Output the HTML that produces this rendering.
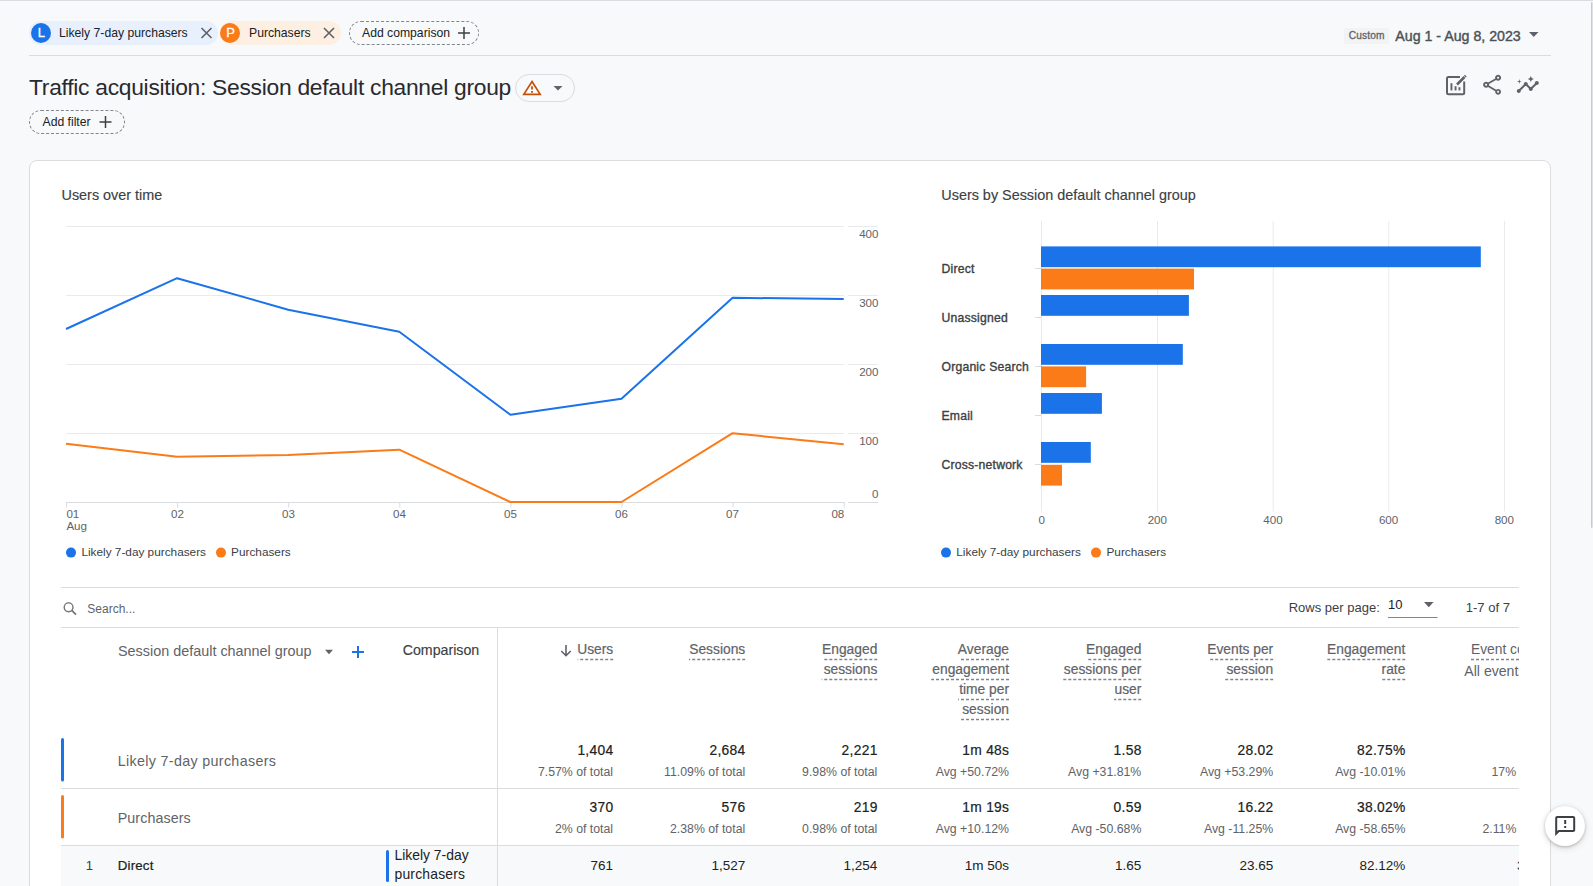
<!DOCTYPE html><html><head><meta charset="utf-8"><style>
html,body{margin:0;padding:0;}
body{width:1593px;height:886px;overflow:hidden;position:relative;background:#f8f9fa;font-family:"Liberation Sans",sans-serif;color:#202124;}
.t{position:absolute;white-space:nowrap;line-height:1;}
svg{position:absolute;left:0;top:0;}
</style></head><body>
<div style="position:absolute;left:0px;top:0px;width:1593px;height:1px;background:#dadce0"></div>
<div style="position:absolute;left:1590.5px;top:1.5px;width:2.5px;height:526px;background:linear-gradient(90deg,#c7cacf 0,#c7cacf 60%,#dfe1e4 60%);border-radius:1.5px"></div>
<div style="position:absolute;left:29px;top:21px;width:189px;height:24px;background:#e8f0fe;border-radius:12px"></div>
<div style="position:absolute;left:31px;top:23px;width:20px;height:20px;background:#1a73e8;border-radius:50%"></div>
<div class="t" style="top:26.30px;font-size:13px;-webkit-text-stroke:0.3px #fff;color:#fff;left:41.3px;transform:translateX(-50%);">L</div>
<div class="t" style="top:26.67px;font-size:12.2px;left:59px;">Likely 7-day purchasers</div>
<div style="position:absolute;left:220px;top:21px;width:121px;height:24px;background:#feefe3;border-radius:12px"></div>
<div style="position:absolute;left:220px;top:23px;width:20px;height:20px;background:#fa7b17;border-radius:50%"></div>
<div class="t" style="top:26.30px;font-size:13px;-webkit-text-stroke:0.3px #fff;color:#fff;left:230.5px;transform:translateX(-50%);">P</div>
<div class="t" style="top:26.67px;font-size:12.2px;left:249px;">Purchasers</div>
<div style="position:absolute;left:349px;top:21px;width:128px;height:22px;border:1px dashed #80868b;border-radius:12px"></div>
<div class="t" style="top:26.67px;font-size:12.2px;left:362px;">Add comparison</div>
<div style="position:absolute;left:1344px;top:28px;width:45px;height:16px;background:#f1f3f4;border-radius:2px"></div>
<div class="t" style="top:30.97px;font-size:10.2px;-webkit-text-stroke:0.3px #5f6368;color:#5f6368;letter-spacing:0.12px;left:1348.8px;">Custom</div>
<div class="t" style="top:29.28px;font-size:14.2px;-webkit-text-stroke:0.4px #4d5156;color:#4d5156;left:1395.3px;">Aug 1 - Aug 8, 2023</div>
<div style="position:absolute;left:29px;top:55px;width:1522px;height:1px;background:#dadce0"></div>
<div class="t" style="top:76.10px;font-size:22.8px;color:#292a2e;letter-spacing:-0.27px;left:29px;">Traffic acquisition: Session default channel group</div>
<div style="position:absolute;left:515px;top:74px;width:58px;height:26px;border:1px solid #dadce0;border-radius:14px"></div>
<div style="position:absolute;left:29px;top:110px;width:94px;height:22px;border:1px dashed #80868b;border-radius:12px"></div>
<div class="t" style="top:115.67px;font-size:12.2px;left:42.5px;">Add filter</div>
<div style="position:absolute;left:29px;top:160px;width:1520px;height:760px;background:#fff;border:1px solid #dadce0;border-radius:8px"></div>
<div class="t" style="top:187.51px;font-size:14.4px;-webkit-text-stroke:0.15px #3c4043;color:#3c4043;left:61.5px;">Users over time</div>
<div class="t" style="top:187.51px;font-size:14.4px;-webkit-text-stroke:0.15px #3c4043;color:#3c4043;left:941.3px;">Users by Session default channel group</div>
<div style="position:absolute;left:61px;top:587px;width:1458px;height:1px;background:#dadce0"></div>
<div style="position:absolute;left:61px;top:627px;width:1458px;height:1px;background:#dadce0"></div>
<div style="position:absolute;left:497px;top:627px;width:1px;height:260px;background:#dadce0"></div>
<div style="position:absolute;left:61px;top:788px;width:1458px;height:1px;background:#dadce0"></div>
<div style="position:absolute;left:61px;top:845px;width:1458px;height:1px;background:#dadce0"></div>
<div style="position:absolute;left:61px;top:846px;width:1458px;height:40px;background:#f8f9fa"></div>
<div style="position:absolute;left:497px;top:846px;width:1px;height:40px;background:#dadce0"></div>
<div class="t" style="top:227.98px;font-size:11.6px;color:#5f6368;right:714.5px;">400</div>
<div class="t" style="top:296.98px;font-size:11.6px;color:#5f6368;right:714.5px;">300</div>
<div class="t" style="top:365.98px;font-size:11.6px;color:#5f6368;right:714.5px;">200</div>
<div class="t" style="top:434.98px;font-size:11.6px;color:#5f6368;right:714.5px;">100</div>
<div class="t" style="top:488.18px;font-size:11.6px;color:#5f6368;right:714.5px;">0</div>
<div class="t" style="top:508.18px;font-size:11.6px;color:#5f6368;left:66.4px;">01</div>
<div class="t" style="top:520.38px;font-size:11.6px;color:#5f6368;left:66.4px;">Aug</div>
<div class="t" style="top:508.18px;font-size:11.6px;color:#5f6368;left:177.5px;transform:translateX(-50%);">02</div>
<div class="t" style="top:508.18px;font-size:11.6px;color:#5f6368;left:288.5px;transform:translateX(-50%);">03</div>
<div class="t" style="top:508.18px;font-size:11.6px;color:#5f6368;left:399.5px;transform:translateX(-50%);">04</div>
<div class="t" style="top:508.18px;font-size:11.6px;color:#5f6368;left:510.5px;transform:translateX(-50%);">05</div>
<div class="t" style="top:508.18px;font-size:11.6px;color:#5f6368;left:621.5px;transform:translateX(-50%);">06</div>
<div class="t" style="top:508.18px;font-size:11.6px;color:#5f6368;left:732.5px;transform:translateX(-50%);">07</div>
<div class="t" style="top:508.18px;font-size:11.6px;color:#5f6368;right:748.7px;">08</div>
<div class="t" style="top:547.41px;font-size:11.8px;color:#3c4043;left:81.4px;">Likely 7-day purchasers</div>
<div class="t" style="top:547.41px;font-size:11.8px;color:#3c4043;left:231.1px;">Purchasers</div>
<div class="t" style="top:547.41px;font-size:11.8px;color:#3c4043;left:956.3px;">Likely 7-day purchasers</div>
<div class="t" style="top:547.41px;font-size:11.8px;color:#3c4043;left:1106.5px;">Purchasers</div>
<div class="t" style="top:262.67px;font-size:12.2px;-webkit-text-stroke:0.35px #3c4043;color:#3c4043;letter-spacing:0.2px;left:941.5px;">Direct</div>
<div class="t" style="top:311.67px;font-size:12.2px;-webkit-text-stroke:0.35px #3c4043;color:#3c4043;letter-spacing:0.2px;left:941.5px;">Unassigned</div>
<div class="t" style="top:360.67px;font-size:12.2px;-webkit-text-stroke:0.35px #3c4043;color:#3c4043;letter-spacing:0.2px;left:941.5px;">Organic Search</div>
<div class="t" style="top:409.67px;font-size:12.2px;-webkit-text-stroke:0.35px #3c4043;color:#3c4043;letter-spacing:0.2px;left:941.5px;">Email</div>
<div class="t" style="top:458.67px;font-size:12.2px;-webkit-text-stroke:0.35px #3c4043;color:#3c4043;letter-spacing:0.2px;left:941.5px;">Cross-network</div>
<div class="t" style="top:513.98px;font-size:11.6px;color:#5f6368;left:1041.7px;transform:translateX(-50%);">0</div>
<div class="t" style="top:513.98px;font-size:11.6px;color:#5f6368;left:1157.3px;transform:translateX(-50%);">200</div>
<div class="t" style="top:513.98px;font-size:11.6px;color:#5f6368;left:1273px;transform:translateX(-50%);">400</div>
<div class="t" style="top:513.98px;font-size:11.6px;color:#5f6368;left:1388.6px;transform:translateX(-50%);">600</div>
<div class="t" style="top:513.98px;font-size:11.6px;color:#5f6368;left:1504.3px;transform:translateX(-50%);">800</div>
<div class="t" style="top:602.54px;font-size:12px;color:#5f6368;left:87.3px;">Search...</div>
<div class="t" style="top:601.00px;font-size:13px;color:#3c4043;left:1288.7px;">Rows per page:</div>
<div class="t" style="top:598.00px;font-size:13px;left:1388px;">10</div>
<div class="t" style="top:601.00px;font-size:13px;color:#3c4043;left:1465.8px;">1-7 of 7</div>
<div class="t" style="top:644.21px;font-size:14.4px;color:#5f6368;left:118px;">Session default channel group</div>
<div class="t" style="top:642.58px;font-size:14.2px;-webkit-text-stroke:0.15px #3c4043;color:#3c4043;left:402.7px;">Comparison</div>
<div class="t" style="top:643.12px;font-size:13.8px;-webkit-text-stroke:0.2px #5f6368;color:#5f6368;right:979.8px;">Users</div>
<div class="t" style="top:643.12px;font-size:13.8px;-webkit-text-stroke:0.2px #5f6368;color:#5f6368;right:847.8px;">Sessions</div>
<div class="t" style="top:643.12px;font-size:13.8px;-webkit-text-stroke:0.2px #5f6368;color:#5f6368;right:715.7px;">Engaged</div>
<div class="t" style="top:663.12px;font-size:13.8px;-webkit-text-stroke:0.2px #5f6368;color:#5f6368;right:715.7px;">sessions</div>
<div class="t" style="top:643.12px;font-size:13.8px;-webkit-text-stroke:0.2px #5f6368;color:#5f6368;right:584px;">Average</div>
<div class="t" style="top:663.12px;font-size:13.8px;-webkit-text-stroke:0.2px #5f6368;color:#5f6368;right:584px;">engagement</div>
<div class="t" style="top:683.12px;font-size:13.8px;-webkit-text-stroke:0.2px #5f6368;color:#5f6368;right:584px;">time per</div>
<div class="t" style="top:703.12px;font-size:13.8px;-webkit-text-stroke:0.2px #5f6368;color:#5f6368;right:584px;">session</div>
<div class="t" style="top:643.12px;font-size:13.8px;-webkit-text-stroke:0.2px #5f6368;color:#5f6368;right:451.70000000000005px;">Engaged</div>
<div class="t" style="top:663.12px;font-size:13.8px;-webkit-text-stroke:0.2px #5f6368;color:#5f6368;right:451.70000000000005px;">sessions per</div>
<div class="t" style="top:683.12px;font-size:13.8px;-webkit-text-stroke:0.2px #5f6368;color:#5f6368;right:451.70000000000005px;">user</div>
<div class="t" style="top:643.12px;font-size:13.8px;-webkit-text-stroke:0.2px #5f6368;color:#5f6368;right:319.79999999999995px;">Events per</div>
<div class="t" style="top:663.12px;font-size:13.8px;-webkit-text-stroke:0.2px #5f6368;color:#5f6368;right:319.79999999999995px;">session</div>
<div class="t" style="top:643.12px;font-size:13.8px;-webkit-text-stroke:0.2px #5f6368;color:#5f6368;right:187.70000000000005px;">Engagement</div>
<div class="t" style="top:663.12px;font-size:13.8px;-webkit-text-stroke:0.2px #5f6368;color:#5f6368;right:187.70000000000005px;">rate</div>
<div class="t" style="top:753.50px;font-size:14.3px;color:#5f6368;letter-spacing:0.33px;left:117.7px;">Likely 7-day purchasers</div>
<div class="t" style="top:810.50px;font-size:14.3px;color:#5f6368;letter-spacing:0.08px;left:117.7px;">Purchasers</div>
<div class="t" style="top:859.00px;font-size:13px;color:#3c4043;left:85.7px;">1</div>
<div class="t" style="top:858.74px;font-size:13.3px;-webkit-text-stroke:0.22px #202124;letter-spacing:0.2px;left:117.7px;">Direct</div>
<div class="t" style="top:849.23px;font-size:13.9px;left:394.5px;">Likely 7-day</div>
<div class="t" style="top:868.43px;font-size:13.9px;letter-spacing:0.2px;left:394.5px;">purchasers</div>
<div class="t" style="top:743.92px;font-size:13.8px;-webkit-text-stroke:0.2px #202124;letter-spacing:0.3px;right:979.9px;margin-right:-0.3px;">1,404</div>
<div class="t" style="top:765.59px;font-size:12.3px;color:#5f6368;right:979.9px;">7.57% of total</div>
<div class="t" style="top:800.82px;font-size:13.8px;-webkit-text-stroke:0.2px #202124;letter-spacing:0.3px;right:979.9px;margin-right:-0.3px;">370</div>
<div class="t" style="top:822.89px;font-size:12.3px;color:#5f6368;right:979.9px;">2% of total</div>
<div class="t" style="top:858.57px;font-size:13.5px;right:979.9px;">761</div>
<div class="t" style="top:743.92px;font-size:13.8px;-webkit-text-stroke:0.2px #202124;letter-spacing:0.3px;right:847.8px;margin-right:-0.3px;">2,684</div>
<div class="t" style="top:765.59px;font-size:12.3px;color:#5f6368;right:847.8px;">11.09% of total</div>
<div class="t" style="top:800.82px;font-size:13.8px;-webkit-text-stroke:0.2px #202124;letter-spacing:0.3px;right:847.8px;margin-right:-0.3px;">576</div>
<div class="t" style="top:822.89px;font-size:12.3px;color:#5f6368;right:847.8px;">2.38% of total</div>
<div class="t" style="top:858.57px;font-size:13.5px;right:847.8px;">1,527</div>
<div class="t" style="top:743.92px;font-size:13.8px;-webkit-text-stroke:0.2px #202124;letter-spacing:0.3px;right:715.7px;margin-right:-0.3px;">2,221</div>
<div class="t" style="top:765.59px;font-size:12.3px;color:#5f6368;right:715.7px;">9.98% of total</div>
<div class="t" style="top:800.82px;font-size:13.8px;-webkit-text-stroke:0.2px #202124;letter-spacing:0.3px;right:715.7px;margin-right:-0.3px;">219</div>
<div class="t" style="top:822.89px;font-size:12.3px;color:#5f6368;right:715.7px;">0.98% of total</div>
<div class="t" style="top:858.57px;font-size:13.5px;right:715.7px;">1,254</div>
<div class="t" style="top:743.92px;font-size:13.8px;-webkit-text-stroke:0.2px #202124;letter-spacing:0.3px;right:584px;margin-right:-0.3px;">1m 48s</div>
<div class="t" style="top:765.59px;font-size:12.3px;color:#5f6368;right:584px;">Avg +50.72%</div>
<div class="t" style="top:800.82px;font-size:13.8px;-webkit-text-stroke:0.2px #202124;letter-spacing:0.3px;right:584px;margin-right:-0.3px;">1m 19s</div>
<div class="t" style="top:822.89px;font-size:12.3px;color:#5f6368;right:584px;">Avg +10.12%</div>
<div class="t" style="top:858.57px;font-size:13.5px;right:584px;">1m 50s</div>
<div class="t" style="top:743.92px;font-size:13.8px;-webkit-text-stroke:0.2px #202124;letter-spacing:0.3px;right:451.70000000000005px;margin-right:-0.3px;">1.58</div>
<div class="t" style="top:765.59px;font-size:12.3px;color:#5f6368;right:451.70000000000005px;">Avg +31.81%</div>
<div class="t" style="top:800.82px;font-size:13.8px;-webkit-text-stroke:0.2px #202124;letter-spacing:0.3px;right:451.70000000000005px;margin-right:-0.3px;">0.59</div>
<div class="t" style="top:822.89px;font-size:12.3px;color:#5f6368;right:451.70000000000005px;">Avg -50.68%</div>
<div class="t" style="top:858.57px;font-size:13.5px;right:451.70000000000005px;">1.65</div>
<div class="t" style="top:743.92px;font-size:13.8px;-webkit-text-stroke:0.2px #202124;letter-spacing:0.3px;right:319.79999999999995px;margin-right:-0.3px;">28.02</div>
<div class="t" style="top:765.59px;font-size:12.3px;color:#5f6368;right:319.79999999999995px;">Avg +53.29%</div>
<div class="t" style="top:800.82px;font-size:13.8px;-webkit-text-stroke:0.2px #202124;letter-spacing:0.3px;right:319.79999999999995px;margin-right:-0.3px;">16.22</div>
<div class="t" style="top:822.89px;font-size:12.3px;color:#5f6368;right:319.79999999999995px;">Avg -11.25%</div>
<div class="t" style="top:858.57px;font-size:13.5px;right:319.79999999999995px;">23.65</div>
<div class="t" style="top:743.92px;font-size:13.8px;-webkit-text-stroke:0.2px #202124;letter-spacing:0.3px;right:187.70000000000005px;margin-right:-0.3px;">82.75%</div>
<div class="t" style="top:765.59px;font-size:12.3px;color:#5f6368;right:187.70000000000005px;">Avg -10.01%</div>
<div class="t" style="top:800.82px;font-size:13.8px;-webkit-text-stroke:0.2px #202124;letter-spacing:0.3px;right:187.70000000000005px;margin-right:-0.3px;">38.02%</div>
<div class="t" style="top:822.89px;font-size:12.3px;color:#5f6368;right:187.70000000000005px;">Avg -58.65%</div>
<div class="t" style="top:858.57px;font-size:13.5px;right:187.70000000000005px;">82.12%</div>
<div style="position:absolute;left:1420px;top:628px;width:99px;height:258px;overflow:hidden">
<div class="t" style="left:51px;top:15.12px;font-size:13.8px;font-weight:400;color:#5f6368">Event count</div>
<div class="t" style="left:44.299999999999955px;top:36.06px;font-size:14.1px;font-weight:400;color:#5f6368">All events</div>
<div class="t" style="left:71.5px;top:137.59px;font-size:12.3px;font-weight:400;color:#5f6368">17%</div>
<div class="t" style="left:62.40000000000009px;top:194.89px;font-size:12.3px;font-weight:400;color:#5f6368">2.11%</div>
<div class="t" style="left:97px;top:230.57px;font-size:13.5px;font-weight:400;color:#202124">3</div>
</div>
<div style="position:absolute;left:1545px;top:806px;width:40px;height:40px;background:#fff;border-radius:50%;box-shadow:0 1px 3px rgba(60,64,67,.3),0 2px 6px 1px rgba(60,64,67,.12)"></div>
<svg width="1593" height="886" viewBox="0 0 1593 886"><path d="M201.5 28 L211.5 38 M211.5 28 L201.5 38" stroke="#5f6368" stroke-width="1.6" fill="none"/><path d="M324 28 L334 38 M334 28 L324 38" stroke="#5f6368" stroke-width="1.6" fill="none"/><path d="M458 33 H470 M464 27 V39" stroke="#3c4043" stroke-width="1.5" fill="none"/><path d="M99.5 122 H111.5 M105.5 116 V128" stroke="#3c4043" stroke-width="1.5" fill="none"/><path d="M1529 32 L1538.5 32 L1533.75 37 Z" fill="#5f6368"/><path d="M532 81.5 L540.2 94.3 L523.8 94.3 Z" stroke="#c5500a" stroke-width="1.7" fill="none" stroke-linejoin="miter"/><rect x="531.1" y="86.3" width="1.8" height="3.2" fill="#c5500a"/><rect x="531.1" y="91" width="1.8" height="1.8" fill="#c5500a"/><path d="M553.5 86 L562.5 86 L558 90.5 Z" fill="#5f6368"/><path d="M1460 77 H1448.5 a1.5 1.5 0 0 0 -1.5 1.5 V92.7 a1.5 1.5 0 0 0 1.5 1.5 H1462.7 a1.5 1.5 0 0 0 1.5 -1.5 V81.5" stroke="#5f6368" stroke-width="2" fill="none"/><rect x="1450.5" y="83.2" width="1.9" height="7.2" fill="#5f6368"/><rect x="1454.6" y="86.2" width="1.9" height="4.2" fill="#5f6368"/><rect x="1458.5" y="87.2" width="1.9" height="3.2" fill="#5f6368"/><path d="M1457 84.5 L1464.5 77 M1464.9 76.6 L1465.8 75.7" stroke="#5f6368" stroke-width="2.6" fill="none"/><g transform="translate(1480.1 72.8)" fill="#5f6368"><path d="M18 16.08c-.76 0-1.44.3-1.96.77L8.91 12.7c.05-.23.09-.46.09-.7s-.04-.47-.09-.7l7.05-4.11c.54.5 1.250.81 2.04.81 1.66 0 3-1.34 3-3s-1.34-3-3-3-3 1.34-3 3c0 .24.04.47.09.7L8.04 9.81C7.5 9.31 6.79 9 6 9c-1.66 0-3 1.34-3 3s1.34 3 3 3c.79 0 1.5-.31 2.04-.81l7.120 4.16c-.05.21-.08.43-.08.65 0 1.61 1.31 2.92 2.92 2.92s2.92-1.31 2.92-2.92-1.31-2.92-2.92-2.92zM18 4c.55 0 1 .45 1 1s-.45 1-1 1-1-.45-1-1 .45-1 1-1zM6 13c-.55 0-1-.45-1-1s.45-1 1-1 1 .45 1 1-.45 1-1 1zm12 7.02c-.55 0-1-.45-1-1s.45-1 1-1 1 .45 1 1-.45 1-1 1z"/></g><g transform="translate(1515.8 73)" fill="#5f6368"><path d="M21 8c-1.45 0-2.26 1.44-1.93 2.51l-3.55 3.56c-.3-.09-.74-.09-1.04 0l-2.55-2.55C12.27 10.45 11.46 9 10 9c-1.45 0-2.27 1.44-1.93 2.52l-4.56 4.55C2.44 15.74 1 16.55 1 18c0 1.1.9 2 2 2 1.45 0 2.26-1.44 1.930-2.51l4.55-4.56c.3.09.74.09 1.04 0l2.55 2.55C12.73 16.55 13.54 18 15 18c1.45 0 2.27-1.44 1.93-2.52l3.56-3.55c1.07.33 2.51-.49 2.51-1.93 0-1.1-.9-2-2-2z"/><path d="M15 9l.94-2.07L18 6l-2.060-.93L15 3l-.92 2.07L12 6l2.08.93z"/><path d="M3.5 11L4 9l2-.5L4 8l-.5-2L3 8l-2 .5L3 9z"/></g><path d="M66 226.5 H844 M848 226.5 H878" stroke="#e8eaed" stroke-width="1"/><path d="M66 295.5 H844 M848 295.5 H878" stroke="#e8eaed" stroke-width="1"/><path d="M66 364.5 H844 M848 364.5 H878" stroke="#e8eaed" stroke-width="1"/><path d="M66 433.5 H844 M848 433.5 H878" stroke="#e8eaed" stroke-width="1"/><path d="M66 502.5 H844.5 M848 502.5 H878" stroke="#dadce0" stroke-width="1"/><path d="M66.5 502 V507.5" stroke="#dadce0" stroke-width="1"/><path d="M177.6 502 V507.5" stroke="#dadce0" stroke-width="1"/><path d="M288.7 502 V507.5" stroke="#dadce0" stroke-width="1"/><path d="M399.79999999999995 502 V507.5" stroke="#dadce0" stroke-width="1"/><path d="M510.9 502 V507.5" stroke="#dadce0" stroke-width="1"/><path d="M622.0 502 V507.5" stroke="#dadce0" stroke-width="1"/><path d="M733.0999999999999 502 V507.5" stroke="#dadce0" stroke-width="1"/><path d="M844.1999999999999 502 V507.5" stroke="#dadce0" stroke-width="1"/><polyline points="66.0,443.8 177.1,456.7 288.2,455 399.29999999999995,449.7 510.4,502 621.5,502 732.5999999999999,433.2 843.6999999999999,444.3" fill="none" stroke="#fa7b17" stroke-width="2" stroke-linejoin="round"/><polyline points="66.0,329 177.1,278.2 288.2,309.7 399.29999999999995,331.8 510.4,414.8 621.5,398.7 732.5999999999999,297.8 843.6999999999999,299" fill="none" stroke="#1a73e8" stroke-width="2" stroke-linejoin="round"/><path d="M1041.5 221 V511.5" stroke="#e8eaed" stroke-width="1"/><path d="M1157.5 221 V511.5" stroke="#e8eaed" stroke-width="1"/><path d="M1273.2 221 V511.5" stroke="#e8eaed" stroke-width="1"/><path d="M1388.8 221 V511.5" stroke="#e8eaed" stroke-width="1"/><path d="M1504.5 221 V511.5" stroke="#e8eaed" stroke-width="1"/><rect x="1041" y="246.4" width="439.8" height="20.8" fill="#1a73e8"/><rect x="1041" y="268.6" width="153.0" height="20.8" fill="#fa7b17"/><rect x="1041" y="295.0" width="147.9" height="20.8" fill="#1a73e8"/><rect x="1041" y="344.0" width="141.8" height="20.8" fill="#1a73e8"/><rect x="1041" y="366.4" width="45.1" height="20.8" fill="#fa7b17"/><rect x="1041" y="393.0" width="60.9" height="20.8" fill="#1a73e8"/><rect x="1041" y="442.0" width="49.8" height="20.8" fill="#1a73e8"/><rect x="1041" y="464.8" width="21.0" height="20.8" fill="#fa7b17"/><path d="M1035 268.5 H1041" stroke="#dadce0" stroke-width="1"/><path d="M1035 317.5 H1041" stroke="#dadce0" stroke-width="1"/><path d="M1035 366.5 H1041" stroke="#dadce0" stroke-width="1"/><path d="M1035 415.5 H1041" stroke="#dadce0" stroke-width="1"/><path d="M1035 464.5 H1041" stroke="#dadce0" stroke-width="1"/><circle cx="71" cy="552.6" r="5" fill="#1a73e8"/><circle cx="221" cy="552.6" r="5" fill="#fa7b17"/><circle cx="946" cy="552.6" r="5" fill="#1a73e8"/><circle cx="1096" cy="552.6" r="5" fill="#fa7b17"/><circle cx="68.6" cy="607.3" r="4.4" stroke="#70757a" stroke-width="1.4" fill="none"/><path d="M71.7 610.4 L76 614.7" stroke="#70757a" stroke-width="1.7" /><path d="M1424 602 L1433.6 602 L1428.8 607.3 Z" fill="#5f6368"/><path d="M1388 617.5 H1437.5" stroke="#80868b" stroke-width="1"/><path d="M325 649.8 L333 649.8 L329 654.3 Z" fill="#5f6368"/><path d="M352 652 H364 M358 646 V658" stroke="#1a73e8" stroke-width="2" fill="none"/><path d="M566 645 V655.5 M561.3 651 L566 655.7 L570.7 651" stroke="#5f6368" stroke-width="1.6" fill="none"/><rect x="61" y="738" width="3" height="43.4" rx="1.5" fill="#1a73e8"/><rect x="61" y="795" width="3" height="43.6" rx="1.5" fill="#fa7b17"/><rect x="386" y="850" width="3" height="32" rx="1.5" fill="#1a73e8"/><g transform="translate(1553.2 813.9)" fill="#3c4043"><path d="M20 2H4c-1.1 0-1.99.9-1.99 2L2 22l4-4h14c1.1 0 2-.9 2-2V4c0-1.1-.9-2-2-2zm0 14H5.17l-.59.59-.58.58V4h16v12zM11 12h2v2h-2zm0-6h2v4h-2z"/></g><path d="M613.2 659.5 H577.7" stroke="#80868b" stroke-width="1.5" stroke-dasharray="3 2"/><path d="M745.2 659.5 H689.0" stroke="#80868b" stroke-width="1.5" stroke-dasharray="3 2"/><path d="M877.3 659.5 H823.4" stroke="#80868b" stroke-width="1.5" stroke-dasharray="3 2"/><path d="M877.3 679.5 H821.6999999999999" stroke="#80868b" stroke-width="1.5" stroke-dasharray="3 2"/><path d="M1009 659.5 H959.1" stroke="#80868b" stroke-width="1.5" stroke-dasharray="3 2"/><path d="M1009 679.5 H931.2" stroke="#80868b" stroke-width="1.5" stroke-dasharray="3 2"/><path d="M1009 699.5 H958.1" stroke="#80868b" stroke-width="1.5" stroke-dasharray="3 2"/><path d="M1009 719.5 H961.1" stroke="#80868b" stroke-width="1.5" stroke-dasharray="3 2"/><path d="M1141.3 659.5 H1087.3" stroke="#80868b" stroke-width="1.5" stroke-dasharray="3 2"/><path d="M1141.3 679.5 H1062.5" stroke="#80868b" stroke-width="1.5" stroke-dasharray="3 2"/><path d="M1141.3 699.5 H1114.1" stroke="#80868b" stroke-width="1.5" stroke-dasharray="3 2"/><path d="M1273.2 659.5 H1208.5" stroke="#80868b" stroke-width="1.5" stroke-dasharray="3 2"/><path d="M1273.2 679.5 H1225.1000000000001" stroke="#80868b" stroke-width="1.5" stroke-dasharray="3 2"/><path d="M1405.3 659.5 H1326.8999999999999" stroke="#80868b" stroke-width="1.5" stroke-dasharray="3 2"/><path d="M1405.3 679.5 H1381.0" stroke="#80868b" stroke-width="1.5" stroke-dasharray="3 2"/><path d="M1519 659.5 H1471" stroke="#80868b" stroke-width="1.5" stroke-dasharray="3 2"/></svg>
</body></html>
